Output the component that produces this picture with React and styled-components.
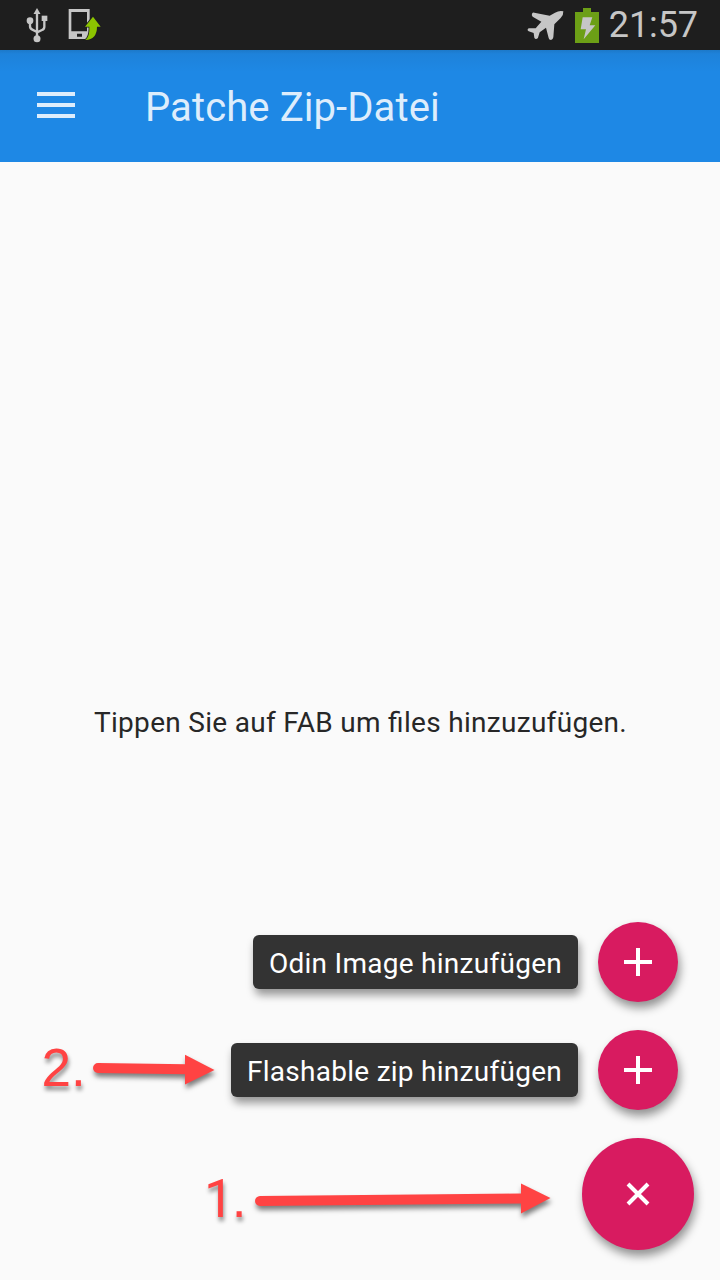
import React from "react";
import styled, { createGlobalStyle } from "styled-components";

const GlobalStyle = createGlobalStyle`
  * {
    box-sizing: border-box;
  }
  body {
    margin: 0;
    background: #fafafa;
    font-family: Roboto, sans-serif;
  }
`;

const Screen = styled.div`
  position: relative;
  display: flex;
  flex-direction: column;
  width: 720px;
  height: 1280px;
  overflow: hidden;
  background: #fafafa;
`;

const StatusBar = styled.header`
  display: flex;
  justify-content: space-between;
  height: 50px;
  padding: 0 22px 0 26px;
  background: #1e1e1e;
`;

const StatusGroup = styled.div`
  display: flex;
  align-items: center;
  gap: ${({ $gap }) => $gap}px;
`;

const Clock = styled.span`
  color: #c6c6c6;
  font-size: 36px;
  line-height: 50px;
  letter-spacing: -0.1px;
`;

const Toolbar = styled.nav`
  display: flex;
  align-items: center;
  gap: 70px;
  height: 112px;
  padding: 0 37px;
  background: linear-gradient(#1c79c9, #1e82da 4px, #1e88e5 22px);
`;

const MenuButton = styled.button`
  display: flex;
  flex-direction: column;
  gap: 7px;
  width: 38px;
  margin-bottom: 2px;
  padding: 0;
  border: 0;
  background: none;
`;

const MenuLine = styled.span`
  height: 4px;
  background: #ddedfc;
`;

const Title = styled.h1`
  margin: 4px 0 0;
  color: #ddedfc;
  font-size: 40px;
  font-weight: 400;
  line-height: 48px;
  letter-spacing: 0.1px;
`;

const Content = styled.main`
  display: flex;
  flex: 1;
  align-items: center;
  justify-content: center;
`;

const Message = styled.p`
  margin: 4px 0 0 1px;
  color: #272727;
  font-size: 28px;
  line-height: 34px;
  letter-spacing: 0.3px;
  font-feature-settings: "liga";
  white-space: nowrap;
`;

const FabMenu = styled.div`
  position: absolute;
  right: 26px;
  bottom: 30px;
  display: flex;
  flex-direction: column;
  align-items: flex-end;
  gap: 28px;
`;

const FabRow = styled.div`
  display: flex;
  align-items: center;
  gap: 20px;
  padding-right: ${({ $inset }) => $inset || 0}px;
`;

const FabLabel = styled.span`
  height: 54px;
  padding: 0 16px;
  border-radius: 6px;
  background: #333;
  box-shadow: 2px 6px 8px rgba(0, 0, 0, 0.4);
  color: #fff;
  font-size: 28px;
  line-height: 58px;
  letter-spacing: 0.27px;
  white-space: nowrap;
`;

const Fab = styled.button`
  display: flex;
  align-items: center;
  justify-content: center;
  width: ${({ $size }) => $size}px;
  height: ${({ $size }) => $size}px;
  padding: 0;
  border: 0;
  border-radius: 50%;
  background: #d81b60;
  box-shadow: 2px 6px 10px rgba(0, 0, 0, 0.42);
`;

const Step = styled.span`
  position: absolute;
  left: ${({ $x }) => $x}px;
  top: ${({ $y }) => $y}px;
  color: #ff4343;
  font-family: "Liberation Sans", Arial, sans-serif;
  font-size: 53px;
  line-height: 60px;
  text-shadow: 1px 4px 4px rgba(0, 0, 0, 0.45);
`;

// Roboto's "1" has no foot
const PlainDigit = styled.span`
  margin-right: -2px;
  font-family: Roboto, sans-serif;
  line-height: 1;
`;

const Arrow = styled.svg`
  position: absolute;
  left: ${({ $x }) => $x}px;
  top: ${({ $y }) => $y}px;
  overflow: visible;
  filter: drop-shadow(1px 4px 2.5px rgba(0, 0, 0, 0.5));
`;

const UsbIcon = () => (
  <svg width="22" height="36" viewBox="78 21 66 108" fill="#c6c6c6">
    <path d="M111 24l10.500 18h-21z" />
    <path
      d="M111 38v76M90 64v15q0 7 7 10l14 7M133 56v24q0 7-7 10l-15 7"
      fill="none"
      stroke="#c6c6c6"
      strokeWidth="7"
    />
    <circle cx="90" cy="62" r="10" />
    <path d="M125 47h17v16h-17z" />
    <circle cx="111" cy="116" r="10.500" />
  </svg>
);

const PhoneIcon = () => (
  <svg width="34" height="36" viewBox="202 21 102 108">
    <path
      d="M204 27h63v90h-63zM212 36v58h47V36zM229 101v9h15v-9z"
      fill="#c6c6c6"
      fillRule="evenodd"
    />
    <path
      d="M277 50l23 30h-11q0 38-35 40 14-12 12-40h-13z"
      fill="#8cc400"
      stroke="#1e1e1e"
      strokeWidth="5"
      paintOrder="stroke"
    />
  </svg>
);

const PlaneIcon = () => (
  <svg width="38" height="32" viewBox="15 15 114 96" fill="#c6c6c6">
    <path d="M124 22Q125 33 116 42L97 61L94 100Q93 107 87 108Q81 108 80 102L72 71L53 85L48 101Q46 105 41 105Q38 104 37 101L35 87L20 82Q16 80 17 76Q18 73 22 73L41 73L58 53L32 38Q28 34 30 29Q32 25 37 26L83 35L99 26Q113 18 124 22Z" />
  </svg>
);

const BatteryIcon = () => (
  <svg width="24" height="36" viewBox="195 21 72 108">
    <path d="M219 24h24v12h24v93h-72V36h24z" fill="#6c9f16" />
    <path d="M218 52h29l-8 24h17l-35 42 7-30h-16z" fill="#c6c6c6" />
  </svg>
);

const PlusIcon = () => (
  <svg width="28" height="28" viewBox="0 0 28 28">
    <path d="M0 14h28M14 0v28" stroke="#fff" strokeWidth="4" />
  </svg>
);

const CloseIcon = () => (
  <svg width="24" height="24" viewBox="0 0 24 24">
    <path d="M2 2l20 20M22 2L2 22" stroke="#fff" strokeWidth="4" />
  </svg>
);

const actions = ["Odin Image hinzufügen", "Flashable zip hinzufügen"];

const App = () => (
  <>
    <GlobalStyle />
    <Screen>
      <StatusBar>
        <StatusGroup $gap={20}>
          <UsbIcon />
          <PhoneIcon />
        </StatusGroup>
        <StatusGroup $gap={10}>
          <PlaneIcon />
          <BatteryIcon />
          <Clock>21:57</Clock>
        </StatusGroup>
      </StatusBar>
      <Toolbar>
        <MenuButton aria-label="Menü">
          <MenuLine />
          <MenuLine />
          <MenuLine />
        </MenuButton>
        <Title>Patche Zip-Datei</Title>
      </Toolbar>
      <Content>
        <Message>Tippen Sie auf FAB um files hinzuzufügen.</Message>
      </Content>
      <FabMenu>
        {actions.map(label => (
          <FabRow key={label} $inset={16}>
            <FabLabel>{label}</FabLabel>
            <Fab $size={80}>
              <PlusIcon />
            </Fab>
          </FabRow>
        ))}
        <Fab $size={112}>
          <CloseIcon />
        </Fab>
      </FabMenu>
      <Step $x={41.5} $y={1038}>2.</Step>
      <Arrow $x={93} $y={1054} width="122" height="32">
        <path d="M5 14l88 1.2" stroke="#ff4343" strokeWidth="10" strokeLinecap="round" />
        <path d="M92 .7l29.5 15.3L92 30.5z" fill="#ff4343" />
      </Arrow>
      <Step $x={204} $y={1169}>
        <PlainDigit>1</PlainDigit>.
      </Step>
      <Arrow $x={255} $y={1183} width="296" height="32">
        <path d="M5 18l261-2.5" stroke="#ff4343" strokeWidth="10" strokeLinecap="round" />
        <path d="M266 .5L295.5 15 266 30.5z" fill="#ff4343" />
      </Arrow>
    </Screen>
  </>
);

export default App;
